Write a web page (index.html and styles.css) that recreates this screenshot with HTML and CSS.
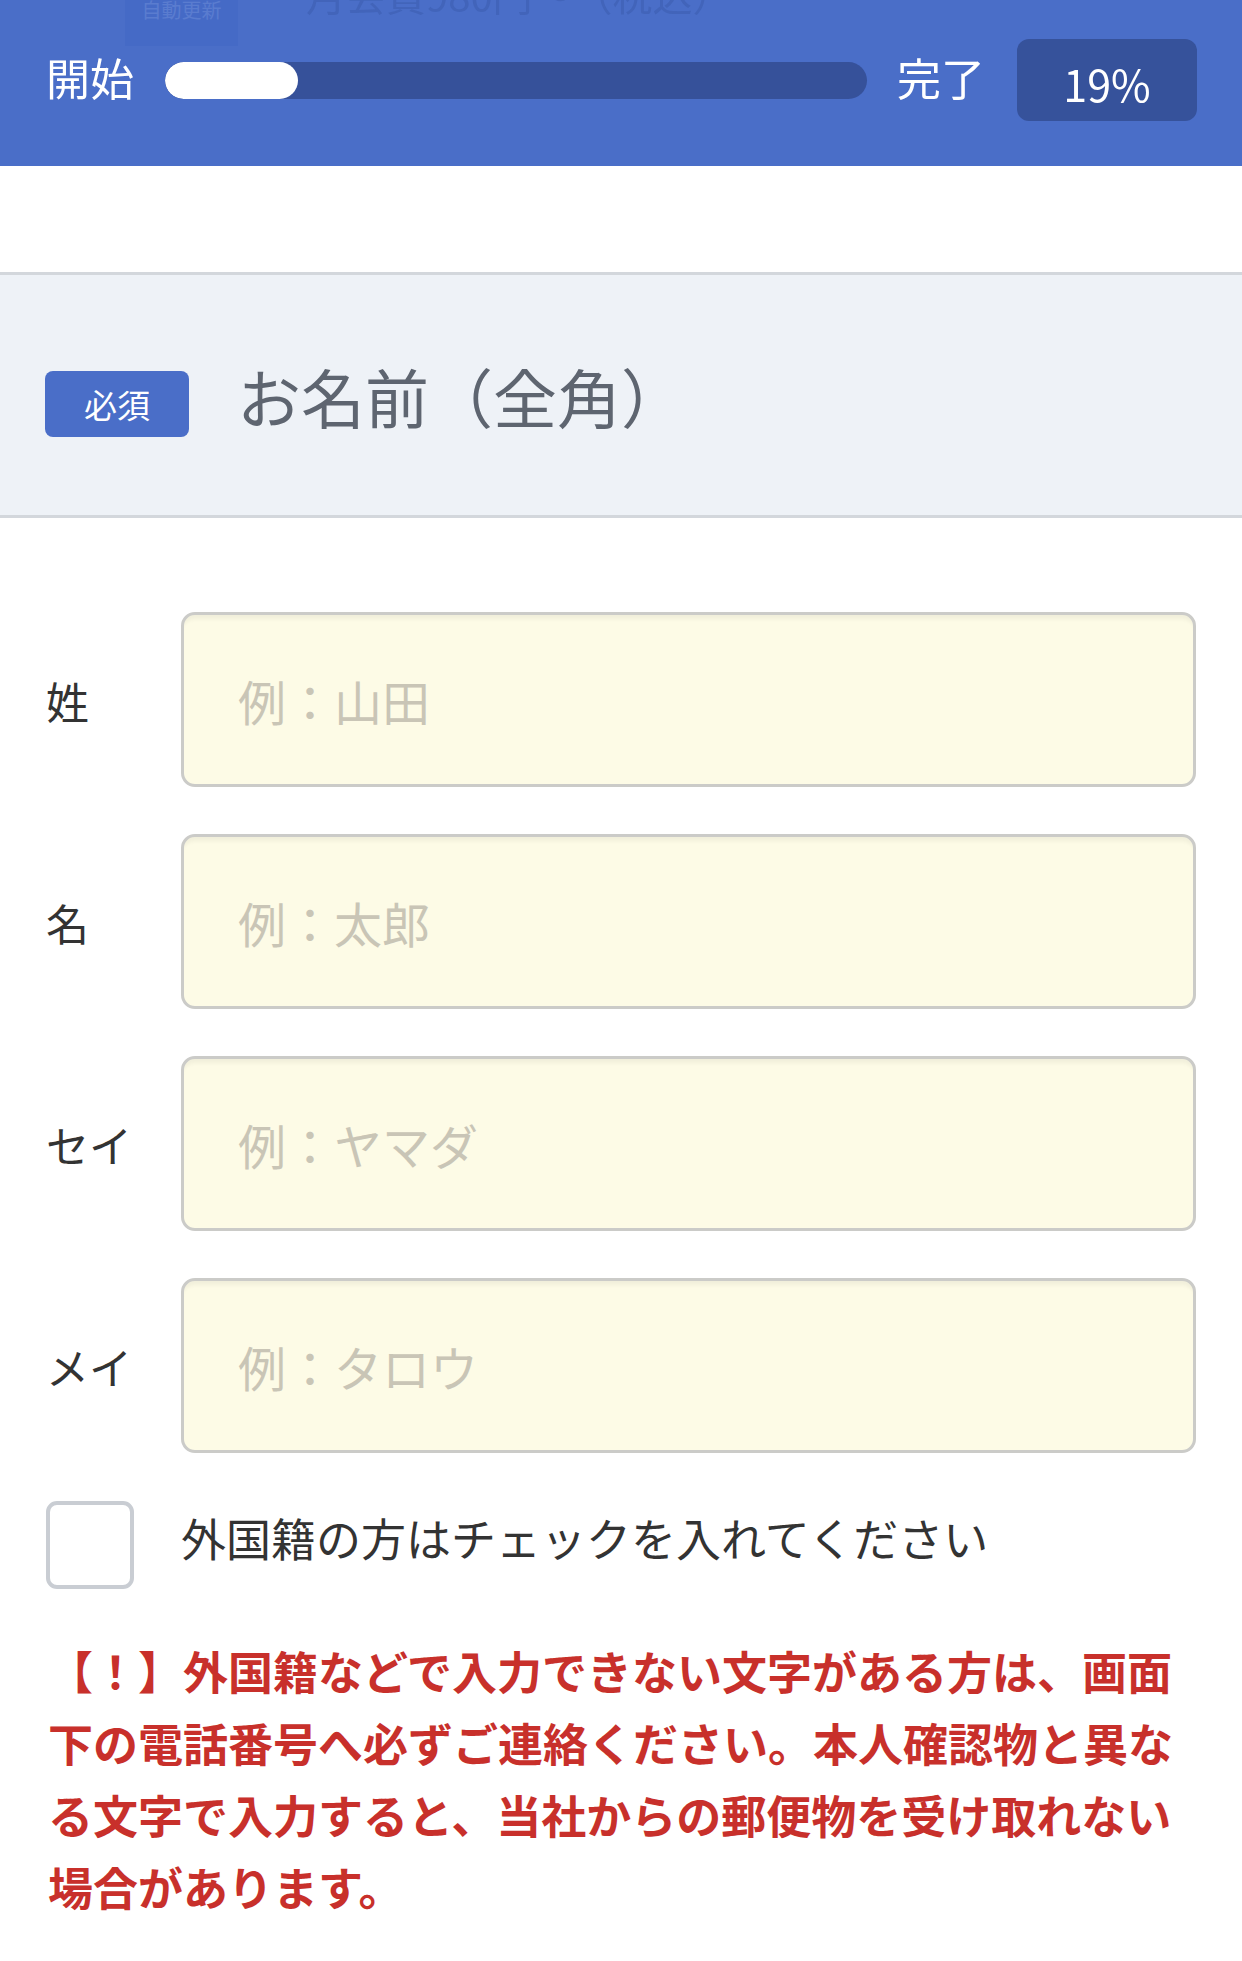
FILE: index.html
```html
<!DOCTYPE html>
<html lang="ja">
<head>
<meta charset="utf-8">
<title>お名前入力</title>
<link rel="stylesheet" href="styles.css">
</head>
<body>
<header class="progress-header">
  <div class="ghost">
    <span class="ghost-badge">自動更新</span>
    <span class="ghost-text">月会費980円〜（税込）</span>
  </div>
  <div class="progress-row">
    <span class="progress-label">開始</span>
    <div class="track"><div class="fill" style="width:19%"></div></div>
    <span class="progress-label">完了</span>
    <span class="percent">19%</span>
  </div>
</header>
<div class="spacer"></div>
<section class="q-head">
  <span class="required">必須</span>
  <h2 class="q-title">お名前（全角）</h2>
</section>
<main class="fields">
  <div class="field-row">
    <label class="field-label">姓</label>
    <input class="field-input" type="text" placeholder="例：山田">
  </div>
  <div class="field-row">
    <label class="field-label">名</label>
    <input class="field-input" type="text" placeholder="例：太郎">
  </div>
  <div class="field-row">
    <label class="field-label">セイ</label>
    <input class="field-input" type="text" placeholder="例：ヤマダ">
  </div>
  <div class="field-row">
    <label class="field-label">メイ</label>
    <input class="field-input" type="text" placeholder="例：タロウ">
  </div>
  <div class="check-row">
    <span class="checkbox"></span>
    <span class="check-label">外国籍の方はチェックを入れてください</span>
  </div>
  <p class="notice">【！】外国籍などで入力できない文字がある方は、画面下の電話番号へ必ずご連絡ください。本人確認物と異なる文字で入力すると、当社からの郵便物を受け取れない場合があります。</p>
</main>
</body>
</html>
```
FILE: styles.css
```css
* { box-sizing: border-box; }
html, body { margin: 0; padding: 0; }
body {
  width: 1242px;
  background: #ffffff;
  font-family: "Noto Sans CJK JP", "Noto Sans", sans-serif;
  color: #333333;
}
.progress-header {
  position: relative;
  height: 166px;
  background: #4a6ec8;
  overflow: hidden;
}
.ghost {
  position: absolute;
  left: 125px;
  top: 0;
  display: flex;
  align-items: flex-start;
  gap: 68px;
  opacity: 0.3;
}
.ghost-badge {
  display: flex;
  align-items: flex-start;
  justify-content: center;
  width: 113px;
  height: 46px;
  background: #3a62c4;
  color: #7f9de0;
  font-size: 20px;
  line-height: 20px;
  overflow: hidden;
}
.ghost-text {
  font-size: 40px;
  color: #2f4f9a;
  line-height: 40px;
  margin-top: -26px;
}
.progress-row {
  position: relative;
  display: flex;
  align-items: center;
  padding: 39px 45px 0 46px;
  height: 121px;
}
.progress-label {
  color: #ffffff;
  font-size: 44px;
  line-height: 1;
  margin-top: -6px;
}
.track {
  flex: 0 0 702px;
  height: 37px;
  margin: 0 30px 0 31px;
  background: #36519a;
  border-radius: 19px;
  overflow: hidden;
}
.fill {
  height: 100%;
  background: #ffffff;
  border-radius: 19px;
}
.percent {
  margin-left: auto;
  width: 180px;
  height: 82px;
  background: #36529b;
  border-radius: 12px;
  color: #ffffff;
  font-size: 43px;
  display: flex;
  align-items: center;
  justify-content: center;
  padding-top: 6px;
}
.spacer { height: 106px; }
.q-head {
  height: 246px;
  border-top: 3px solid #d3d7dc;
  border-bottom: 3px solid #d3d7dc;
  background: #eef2f7;
  display: flex;
  align-items: center;
  padding: 0 0 0 45px;
}
.required {
  width: 144px;
  height: 66px;
  background: #4a6ec8;
  border-radius: 8px;
  color: #ffffff;
  font-size: 33px;
  display: flex;
  align-items: center;
  justify-content: center;
  margin-top: 18px;
}
.q-title {
  margin: 0 0 0 48px;
  font-size: 64px;
  font-weight: normal;
  color: #5e6570;
  letter-spacing: 0;
}
.fields {
  padding: 94px 46px 60px 46px;
  display: flex;
  flex-direction: column;
}
.field-row {
  display: flex;
  align-items: center;
  margin-bottom: 47px;
}
.field-label {
  width: 135px;
  font-size: 43px;
  color: #333333;
  flex: 0 0 135px;
}
.field-input {
  flex: 1;
  height: 175px;
  border: 3px solid #cbcbc8;
  border-radius: 14px;
  background: #fdfbe6;
  box-shadow: inset 0 7px 4px -3px rgba(0, 0, 0, 0.05);
  padding: 0 0 0 54px;
  font-family: "Noto Sans CJK JP", "Noto Sans", sans-serif;
  font-size: 48px;
  color: #333333;
  outline: none;
}
.field-input::placeholder { color: #c9c5b6; }
.check-row {
  display: flex;
  align-items: center;
  margin-top: 1px;
}
.checkbox {
  width: 88px;
  height: 88px;
  border: 4px solid #c9cdd3;
  border-radius: 11px;
  background: #ffffff;
  flex: 0 0 88px;
}
.check-label {
  margin-left: 47px;
  font-size: 45px;
  color: #333333;
  margin-top: -16px;
}
.notice {
  margin: 46px 0 0 2px;
  font-size: 45px;
  line-height: 72px;
  font-weight: bold;
  color: #c8302b;
}
```
